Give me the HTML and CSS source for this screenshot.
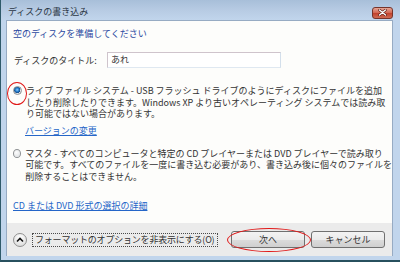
FILE: index.html
```html
<!DOCTYPE html>
<html lang="ja">
<head>
    <meta charset="UTF-8">
    <title>ディスクの書き込み</title>
    <link rel="stylesheet" href="styles.css">
</head>
<body>
<div class="window">
    <div class="titlebar">
        <span class="title">ディスクの書き込み</span>
        <span class="close">
            <svg width="9" height="7" viewBox="0 0 9 7">
                <path d="M1.5 1 L7.5 6 M7.5 1 L1.5 6" stroke="#5a1c12" stroke-width="2.6" stroke-linecap="round"/>
                <path d="M1.5 1 L7.5 6 M7.5 1 L1.5 6" stroke="#fff" stroke-width="1.4" stroke-linecap="round"/>
            </svg>
        </span>
    </div>
    <div class="client">
        <div class="content">
            <div class="instruction">空のディスクを準備してください</div>
            <div class="title-row">
                <label class="label" for="discTitle">ディスクのタイトル:</label>
                <div class="textbox" id="discTitle">あれ</div>
            </div>

            <div class="option first">
                <span class="radio checked"></span>
                <div class="option-text">
                    ライブ ファイル システム - USB フラッシュ ドライブのようにディスクにファイルを追加<br>
                    したり削除したりできます。Windows XP より古いオペレーティング システムでは読み取<br>
                    り可能ではない場合があります。
                    <a href="#" class="link version">バージョンの変更</a>
                </div>
            </div>

            <div class="option second">
                <span class="radio"></span>
                <div class="option-text">
                    マスタ - すべてのコンピュータと特定の CD プレイヤーまたは DVD プレイヤーで読み取り<br>
                    可能です。すべてのファイルを一度に書き込む必要があり、書き込み後に個々のファイルを<br>
                    削除することはできません。
                </div>
            </div>

            <a href="#" class="link details">CD または DVD 形式の選択の詳細</a>
        </div>
        <div class="footer">
            <span class="chevron">
                <svg width="8" height="6" viewBox="0 0 8 6">
                    <path d="M1 4.5 L4 1.5 L7 4.5" fill="none" stroke="#111" stroke-width="1.6"/>
                </svg>
            </span>
            <span class="toggle">フォーマットのオプションを非表示にする(O)</span>
            <span class="spacer"></span>
            <button class="btn">次へ</button>
            <button class="btn">キャンセル</button>
        </div>
    </div>

    <span class="mark mark-radio"></span>
    <span class="mark mark-next"></span>
</div>
</body>
</html>
```

FILE: styles.css
```css
* {
    box-sizing: border-box;
}
body {
    margin: 0;
    font-family: "Noto Sans CJK JP", "Noto Sans", sans-serif;
    font-size: 9px;
    color: #333;
}
.window {
    position: relative;
    width: 400px;
    height: 262px;
    display: flex;
    flex-direction: column;
    background: #c1d5ec;
    border-left: 1px solid #2f5a6a;
    border-bottom: 2px solid #27505e;
}
.titlebar {
    height: 20px;
    display: flex;
    align-items: center;
    justify-content: space-between;
    padding: 0 7px 0 7px;
    background: linear-gradient(#a8bfd9, #b8cce4 55%, #c1d5ec);
}
.title {
    color: #2a3644;
    line-height: 12px;
    padding-top: 4px;
}
.close {
    width: 21px;
    height: 12px;
    margin-top: 5px;
    display: flex;
    align-items: center;
    justify-content: center;
    border: 1px solid #76342a;
    border-radius: 3px;
    background: linear-gradient(#e7a595, #d36a56 45%, #c2432e 55%, #cf6a52);
}
.client {
    flex: 1;
    display: flex;
    flex-direction: column;
    margin: 0 7px 4px 5px;
    border: 1px solid #97abc3;
    border-bottom: none;
}
.content {
    flex: 1;
    background: #fdfdfb;
    padding: 7px 0 0 6px;
}
.instruction {
    color: #2a48a0;
    line-height: 12px;
}
.title-row {
    display: flex;
    align-items: center;
    margin-top: 12px;
}
.label {
    width: 94px;
    padding-left: 1px;
}
.textbox {
    width: 174px;
    height: 16px;
    line-height: 14px;
    padding-left: 3px;
    border: 1px solid;
    border-color: #cfc4cc #d3dfeb #dfe8f1 #cfc4cc;
    background: #fff;
}
.option {
    display: flex;
    align-items: flex-start;
    line-height: 11.5px;
    white-space: nowrap;
}
.option.first {
    margin-top: 17px;
}
.option.second {
    margin-top: 11px;
}
.option-text {
    margin-left: 4px;
}
.radio {
    width: 9px;
    height: 9px;
    margin-top: 1px;
    border-radius: 50%;
    border: 1px solid #8f9294;
    background: radial-gradient(circle at 40% 35%, #fdfdfd, #d9dcdf);
}
.radio.checked {
    background: radial-gradient(circle at 45% 40%, #8fd0ff 0, #2f86d3 1.6px, #124d8e 3px, #e4e8ec 3.4px, #cfd4d8);
}
.link {
    color: #2566c8;
    text-decoration: underline;
}
.version {
    display: block;
    margin-top: 5.5px;
    margin-left: -1px;
}
.details {
    display: block;
    margin-top: 17.5px;
    line-height: 11.5px;
}
.footer {
    height: 33px;
    display: flex;
    align-items: center;
    padding: 0 7px 0 6px;
    background: #ebebeb;
}
.chevron {
    width: 14px;
    height: 14px;
    display: flex;
    align-items: center;
    justify-content: center;
    border: 1px solid #909090;
    border-radius: 50%;
    background: radial-gradient(circle at 50% 30%, #ffffff, #d5d5d5);
}
.toggle {
    margin-left: 5px;
    height: 14px;
    line-height: 12px;
    padding: 0 3px 0 2px;
    letter-spacing: -0.2px;
    white-space: nowrap;
    border: 1px dotted #4a4a4a;
}
.spacer {
    flex: 1;
}
.btn {
    width: 74px;
    height: 17px;
    margin-left: 6px;
    padding: 0;
    font-family: inherit;
    font-size: 9px;
    color: #333;
    border: 1px solid #707070;
    border-radius: 3px;
    background: linear-gradient(#f3f3f3, #ebebeb 50%, #dcdcdc 51%, #cfcfcf);
}
.mark {
    position: absolute;
    border: 1.5px solid #e01818;
    border-radius: 50%;
}
.mark-radio {
    left: 6px;
    top: 82px;
    width: 20px;
    height: 23px;
}
.mark-next {
    left: 226px;
    top: 228px;
    width: 84px;
    height: 24px;
}
```
